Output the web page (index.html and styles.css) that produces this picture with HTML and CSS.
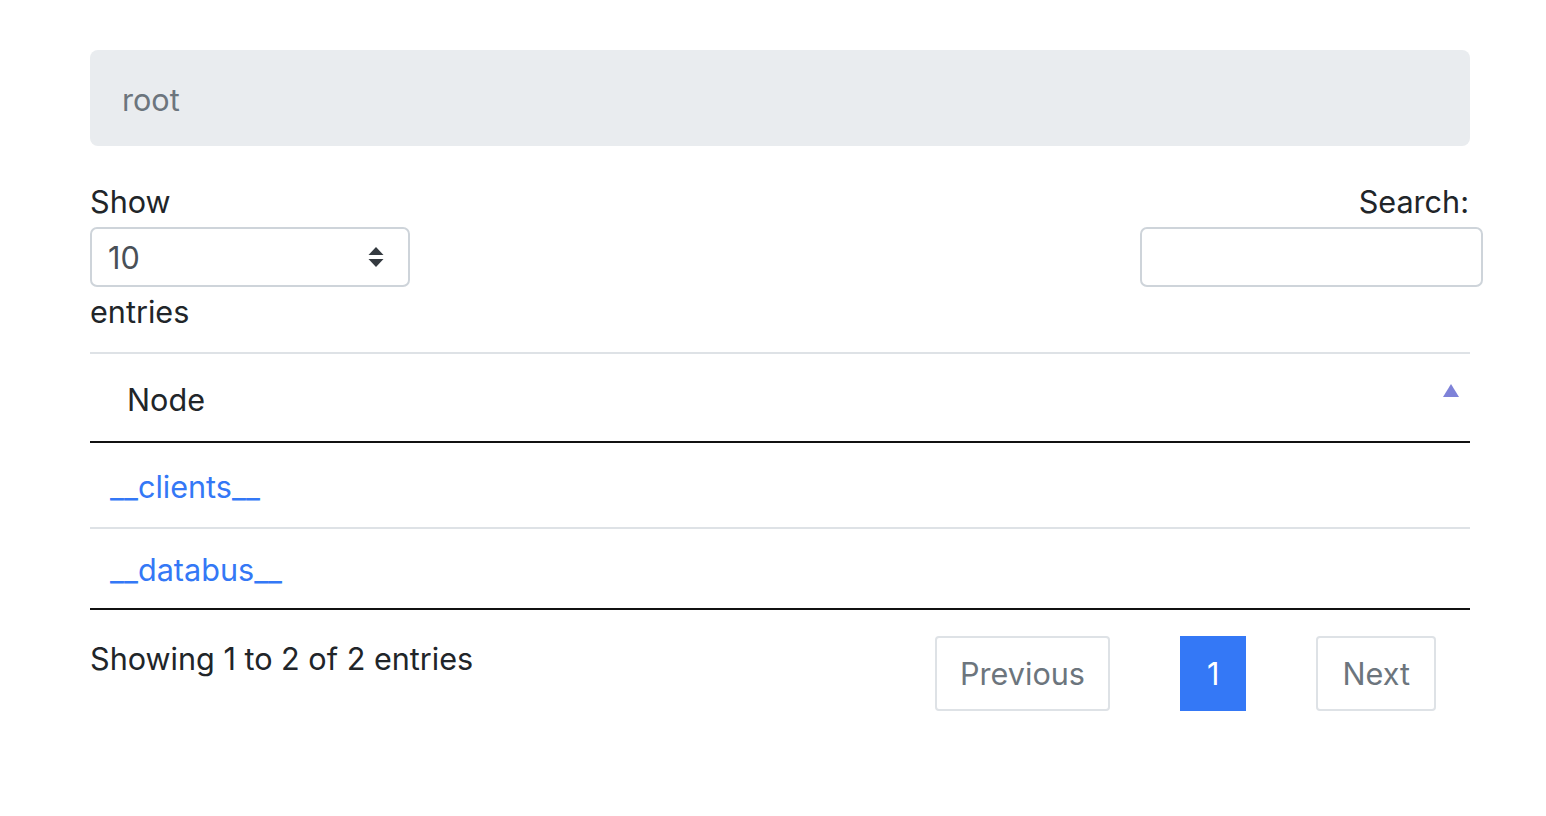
FILE: index.html
```html
<!DOCTYPE html>
<html lang="en">
<head>
<meta charset="utf-8">
<title>root</title>
<link rel="stylesheet" href="styles.css">
</head>
<body>
<div class="container">
  <nav class="breadcrumb"><span class="crumb">root</span></nav>

  <div class="controls">
    <div class="length">
      <div class="label">Show</div>
      <div class="select">
        <span class="select-value">10</span>
        <svg class="select-arrows" width="16" height="22" viewBox="0 0 16 22"><path d="M8 1 L15.5 9 H0.5 Z M0.5 13 H15.5 L8 21 Z" fill="#343a40"/></svg>
      </div>
      <div class="label">entries</div>
    </div>
    <div class="search">
      <div class="label">Search:</div>
      <div class="search-input"></div>
    </div>
  </div>

  <table class="table">
    <thead>
      <tr><th class="sorting">Node<span class="sort-arrow"></span></th></tr>
    </thead>
    <tbody>
      <tr class="row-first"><td><a href="#">__clients__</a></td></tr>
      <tr class="row-last"><td><a href="#">__databus__</a></td></tr>
    </tbody>
  </table>

  <div class="footer">
    <div class="info">Showing 1 to 2 of 2 entries</div>
    <ul class="pagination">
      <li class="page prev">Previous</li>
      <li class="page active">1</li>
      <li class="page">Next</li>
    </ul>
  </div>
</div>
</body>
</html>
```

FILE: styles.css
```css
html, body {
  margin: 0;
  padding: 0;
  background: #fff;
}
body {
  font-family: Inter, "Liberation Sans", sans-serif;
  font-size: 30.6px;
  line-height: 45px;
  color: #212529;
}
.container {
  width: 1380px;
  padding: 50px 0 0 90px;
}
.breadcrumb {
  height: 96px;
  box-sizing: border-box;
  padding: 3px 32px 0;
  display: flex;
  align-items: center;
  background: #e9ecef;
  border-radius: 8px;
  color: #6c757d;
}
.controls {
  display: flex;
  justify-content: space-between;
  margin-top: 33px;
}
.label {
  line-height: 45px;
}
.length .select {
  margin-top: 3px;
  width: 320px;
  height: 60px;
  box-sizing: border-box;
  border: 2px solid #ced4da;
  border-radius: 7px;
  display: flex;
  align-items: center;
  justify-content: space-between;
  padding: 0 24px 0 16px;
  color: #495057;
}
.select-arrows {
  display: block;
}
.length .label:last-child {
  padding-top: 2px;
}
.search {
  display: flex;
  flex-direction: column;
  align-items: flex-end;
}
.search .label {
  margin-right: 1px;
}
.search-input {
  margin-top: 3px;
  margin-right: -13px;
  width: 343px;
  height: 60px;
  box-sizing: border-box;
  border: 2px solid #ced4da;
  border-radius: 7px;
}
.table {
  width: 100%;
  margin-top: 18px;
  border-collapse: collapse;
  border-top: 2px solid #dee2e6;
}
.table th {
  position: relative;
  text-align: left;
  font-weight: 400;
  padding: 23px 37px 19px;
  border-bottom: 2px solid #111;
}
.sort-arrow {
  position: absolute;
  right: 11px;
  top: 30px;
  width: 0;
  height: 0;
  border-left: 8px solid transparent;
  border-right: 8px solid transparent;
  border-bottom: 13px solid #7e82d8;
}
.table td {
  padding: 18px 20px 16px;
  border-top: 2px solid #dee2e6;
}
.table .row-first td {
  border-top: none;
  padding: 21px 20px 18px;
}
.table .row-last td {
  border-bottom: 2px solid #111;
}
.table a {
  color: #3478f6;
  text-decoration: none;
}
.footer {
  display: flex;
  justify-content: space-between;
  align-items: flex-start;
  margin-top: 26px;
}
.info {
  color: #212529;
}
.pagination {
  list-style: none;
  margin: 0 34px 0 0;
  padding: 0;
  display: flex;
  gap: 70px;
}
.page {
  height: 75px;
  box-sizing: border-box;
  padding: 0 24px;
  display: flex;
  align-items: center;
  border: 2px solid #dee2e6;
  border-radius: 4px;
  color: #6c757d;
}
.page.prev {
  padding: 0 23px;
}
.page.active {
  background: #3478f6;
  border-color: #3478f6;
  border-radius: 0;
  color: #fff;
  padding: 0 25px;
}
```
